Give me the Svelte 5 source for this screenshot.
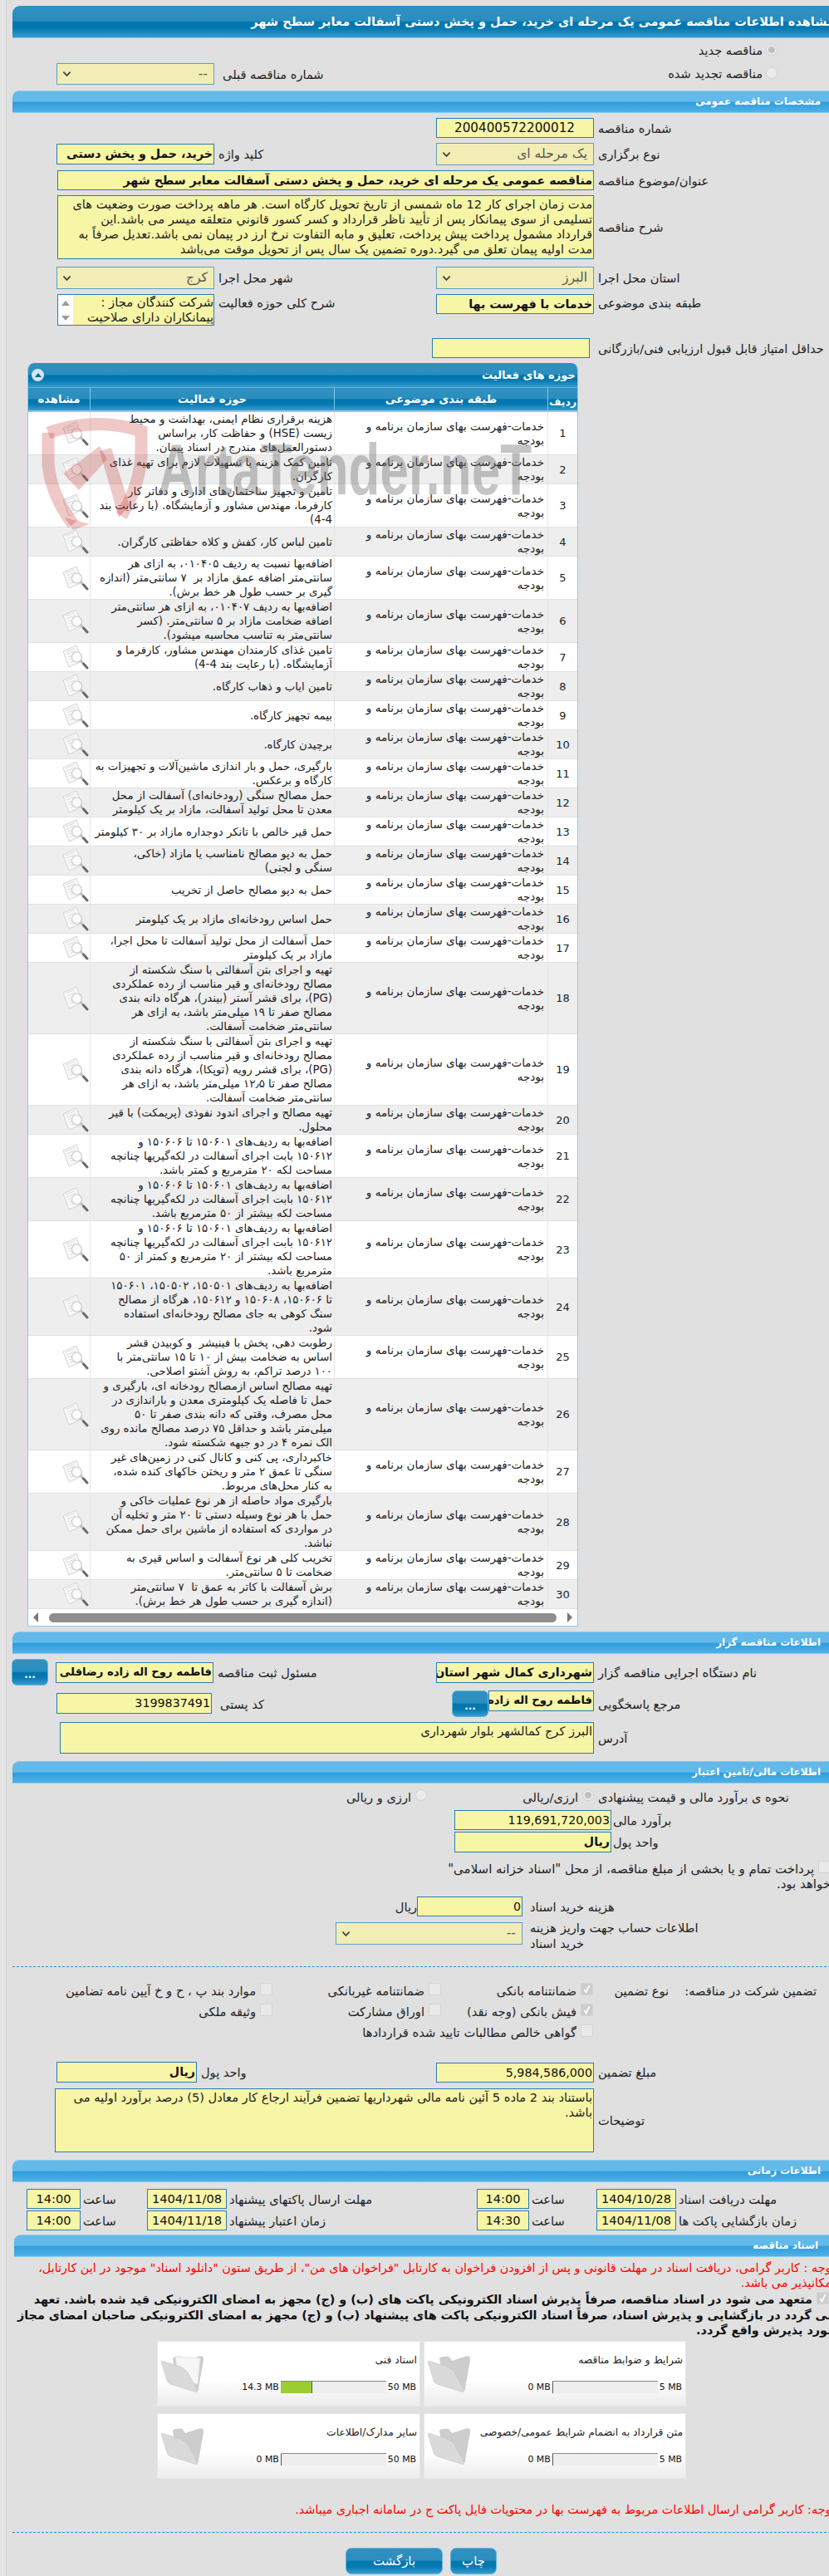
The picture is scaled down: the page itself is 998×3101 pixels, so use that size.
<script>
  const cat = 'خدمات-فهرست بهای سازمان برنامه و\nبودجه';
  const lak1 = 'اضافه‌بها به ردیف‌های ۱۵۰۶۰۱ تا ۱۵۰۶۰۶ و\n۱۵۰۶۱۲ بابت اجرای آسفالت در لکه‌گیریها چنانچه\n';
  const rows = [
    'هزینه برقراری نظام ایمنی، بهداشت و محیط\nزیست (HSE) و حفاظت کار، براساس\nدستورالعمل‌های مندرج در اسناد پیمان.',
    'تامین کمک هزینه یا تسهیلات لازم برای تهیه غذای\nکارگران.',
    'تامین و تجهیز ساختمان‌های اداری و دفاتر کار\nکارفرما، مهندس مشاور و آزمایشگاه. (با رعایت بند\n4-4)',
    'تامین لباس کار، کفش و کلاه حفاظتی کارگران.',
    'اضافه‌بها نسبت به ردیف ۰۱۰۴۰۵، به ازای هر\nسانتی‌متر اضافه عمق مازاد بر  ۷ سانتی‌متر (اندازه\nگیری بر حسب طول هر خط برش).',
    'اضافه‌بها به ردیف ۰۱۰۴۰۷، به ازای هر سانتی‌متر\nاضافه ضخامت مازاد بر ۵ سانتی‌متر. (کسر\nسانتی‌متر به تناسب محاسبه میشود).',
    'تامین غذای کارمندان مهندس مشاور، کارفرما و\nآزمایشگاه. (با رعایت بند 4-4)',
    'تامین ایاب و ذهاب کارگاه.',
    'بیمه تجهیز کارگاه.',
    'برچیدن کارگاه.',
    'بارگیری، حمل و بار اندازی ماشین‌آلات و تجهیزات به\nکارگاه و برعکس.',
    'حمل مصالح سنگی (رودخانه‌ای) آسفالت از محل\nمعدن تا محل تولید آسفالت، مازاد بر یک کیلومتر',
    'حمل قیر خالص با تانکر دوجداره مازاد بر ۳۰ کیلومتر',
    'حمل به دپو مصالح نامناسب یا مازاد (خاکی،\nسنگی و لجنی)',
    'حمل به دپو مصالح حاصل از تخریب',
    'حمل اساس رودخانه‌ای مازاد بر یک کیلومتر',
    'حمل آسفالت از محل تولید آسفالت تا محل اجرا،\nمازاد بر یک کیلومتر',
    'تهیه و اجرای بتن آسفالتی با سنگ شکسته از\nمصالح رودخانه‌ای و قیر مناسب از رده عملکردی\n(PG)، برای قشر آستر (بیندر)، هرگاه دانه بندی\nمصالح صفر تا ۱۹ میلی‌متر باشد، به ازای هر\nسانتی‌متر ضخامت آسفالت.',
    'تهیه و اجرای بتن آسفالتی با سنگ شکسته از\nمصالح رودخانه‌ای و قیر مناسب از رده عملکردی\n(PG)، برای قشر رویه (توپکا)، هرگاه دانه بندی\nمصالح صفر تا ۱۲٫۵ میلی‌متر باشد، به ازای هر\nسانتی‌متر ضخامت آسفالت.',
    'تهیه مصالح و اجرای اندود نفوذی (پریمکت) با قیر\nمحلول.',
    lak1 + 'مساحت لکه ۲۰ مترمربع و کمتر باشد.',
    lak1 + 'مساحت لکه بیشتر از ۵۰ مترمربع باشد.',
    lak1 + 'مساحت لکه بیشتر از ۲۰ مترمربع و کمتر از ۵۰\nمترمربع باشد.',
    'اضافه‌بها به ردیف‌های ۱۵۰۵۰۱، ۱۵۰۵۰۲، ۱۵۰۶۰۱\nتا ۱۵۰۶۰۶، ۱۵۰۶۰۸ و ۱۵۰۶۱۲، هرگاه از مصالح\nسنگ کوهی به جای مصالح رودخانه‌ای استفاده\nشود.',
    'رطوبت دهی، پخش با فینیشر  و کوبیدن قشر\nاساس به ضخامت بیش از ۱۰ تا ۱۵ سانتی‌متر با\n۱۰۰ درصد تراکم، به روش آشتو اصلاحی.',
    'تهیه مصالح اساس ازمصالح رودخانه ای، بارگیری و\nحمل تا فاصله یک کیلومتری معدن و باراندازی در\nمحل مصرف، وقتی که دانه بندی صفر تا ۵۰\nمیلی‌متر باشد و حداقل ۷۵ درصد مصالح مانده روی\nالک نمره ۴ در دو جبهه شکسته شود.',
    'خاکبرداری، پی کنی و کانال کنی در زمین‌های غیر\nسنگی تا عمق ۲ متر و ریختن خاکهای کنده شده،\nبه کنار محل‌های مربوط.',
    'بارگیری مواد حاصله از هر نوع عملیات خاکی و\nحمل با هر نوع وسیله دستی تا ۲۰ متر و تخلیه آن\nدر مواردی که استفاده از ماشین برای حمل ممکن\nنباشد.',
    'تخریب کلی هر نوع آسفالت و اساس قیری به\nضخامت تا ۵ سانتی‌متر.',
    'برش آسفالت با کاتر به عمق تا  ۷ سانتی‌متر\n(اندازه گیری بر حسب طول هر خط برش).'
  ];
  const docs = [
    { title: 'شرایط و ضوابط مناقصه', used: '0 MB', max: '5 MB', pct: 0 },
    { title: 'اسناد فنی', used: '14.3 MB', max: '50 MB', pct: 29, paper: true },
    { title: 'متن قرارداد به انضمام شرایط عمومی/خصوصی', used: '0 MB', max: '5 MB', pct: 0 },
    { title: 'سایر مدارک/اطلاعات', used: '0 MB', max: '50 MB', pct: 0 }
  ];
</script>

{#snippet chevron()}
  <svg class="chev" viewBox="0 0 12 8" aria-hidden="true"><path d="M1.5 1.5 L6 6 L10.5 1.5" fill="none" stroke="#444" stroke-width="2"/></svg>
{/snippet}

{#snippet tick()}
  <svg viewBox="0 0 15 15" aria-hidden="true"><path d="M4 8 L6.5 12 L11 2.5" fill="none" stroke="#fff" stroke-width="2"/></svg>
{/snippet}

{#snippet glass()}
  <svg class="glass" viewBox="0 0 32 30" aria-hidden="true">
    <path d="M1 8 L17 1 L24 20 L8 27 Z" fill="#f8f8f8" stroke="#d4d4d4"/>
    <path d="M4 9 L15 4.500 M5.500 12 L16 7.500 M7 15 L11 13.500 M8.500 18 L11 17 M10 21 L15 19" stroke="#dcdcdc" fill="none"/>
    <circle cx="17.500" cy="15" r="6" fill="#fdfdfd" fill-opacity="0.7" stroke="#cdcdcd" stroke-width="1.2"/>
    <path d="M22 19.500 L25.500 23" stroke="#bdbdbd" stroke-width="2.500"/>
    <path d="M25.500 23 L30 28" stroke="#6a6a6a" stroke-width="3" stroke-linecap="round"/>
  </svg>
{/snippet}

{#snippet folder(paper)}
  <svg class="folder" viewBox="0 0 54 48" aria-hidden="true">
    <path d="M15 5 Q16 3 19 3 L25 2.500 Q27 3 30 8 L47 2.500 Q53 1.500 52 7 L46 41 Q45 47 41 45 L20 38 Z" fill="#cdcdcd"/>
    {#if paper}
      <path d="M18 3 L48 5 L45 36 L22 30 Z" fill="#f6f6f6" stroke="#e2e2e2"/>
    {/if}
    <path d="M1.500 10 Q0.500 7.500 3.500 8.500 L24 15 Q30 17.500 33 22 L45 44 Q44 46 40 44.500 L12 36 Q8.500 34.500 7.500 30 Z" fill="#dadada" stroke="#c4c4c4" stroke-width="0.6"/>
  </svg>
{/snippet}

<div class="root">
  <div class="strip"></div>
  <div class="page">
    <div class="bar title">مشاهده اطلاعات مناقصه عمومی یک مرحله ای خرید، حمل و پخش دستی آسفالت معابر سطح شهر</div>

    <div class="choice mt7">
      <span class="radio on"></span><span>مناقصه جدید</span>
    </div>
    <div class="choice-row mt9">
      <div class="choice"><span class="radio"></span><span>مناقصه تجدید شده</span></div>
      <div class="prev">
        <span class="lbl">شماره مناقصه قبلی</span>
        <div class="sel h26 w190"><span>--</span>{@render chevron()}</div>
      </div>
    </div>

    <div class="sec mt7">مشخصات مناقصه عمومی</div>

    <div class="form mt6">
      <span class="lbl">شماره مناقصه</span>
      <div class="fld h24 num center">200400572200012</div>
    </div>
    <div class="form mt6">
      <span class="lbl">نوع برگزاری</span>
      <div class="sel h27"><span>یک مرحله ای</span>{@render chevron()}</div>
      <span class="lbl">کلید واژه</span>
      <div class="fld h25 b">خرید، حمل و پخش دستی</div>
    </div>
    <div class="form mt6">
      <span class="lbl">عنوان/موضوع مناقصه</span>
      <div class="fld h24 b span3 from1">مناقصه عمومی یک مرحله ای خرید، حمل و پخش دستی آسفالت معابر سطح شهر</div>
    </div>
    <div class="form mt6">
      <span class="lbl">شرح مناقصه</span>
      <div class="area span3 from1 h77">مدت زمان اجرای کار 12 ماه شمسی از تاریخ تحویل کارگاه است. هر ماهه پرداخت صورت وضعیت های
تسلیمی از سوی پیمانکار پس از تأیید ناظر قرارداد و کسر کسور قانوني متعلقه میسر می باشد.این
قرارداد مشمول پرداخت پیش پرداخت، تعلیق و مابه التفاوت نرخ ارز در پیمان نمی باشد.تعدیل صرفاً به
مدت اولیه پیمان تعلق می گیرد.دوره تضمین یک سال پس از تحویل موقت می‌باشد</div>
    </div>
    <div class="form mt9">
      <span class="lbl">استان محل اجرا</span>
      <div class="sel h27"><span>البرز</span>{@render chevron()}</div>
      <span class="lbl">شهر محل اجرا</span>
      <div class="sel h27"><span>کرج</span>{@render chevron()}</div>
    </div>
    <div class="form mt6 top">
      <span class="lbl up">طبقه بندی موضوعی</span>
      <div class="fld h24 b">خدمات با فهرست بها</div>
      <span class="lbl up">شرح کلی حوزه فعالیت</span>
      <div class="list">
        <div class="list-text">شرکت کنندگان مجاز :
پیمانکاران دارای صلاحیت</div>
        <div class="list-bar"><i class="tri-up"></i><i class="tri-down"></i></div>
      </div>
    </div>
    <div class="score mt15">
      <span class="lbl">حداقل امتیاز قابل قبول ارزیابی فنی/بازرگانی</span>
      <div class="fld h24"></div>
    </div>

    <div class="tablewrap mt6">
      <div class="tcap"><span>حوزه های فعالیت</span><span class="collapse"><i></i></span></div>
      <table>
        <colgroup><col class="c1"/><col class="c2"/><col class="c3"/><col class="c4"/></colgroup>
        <thead>
          <tr><th class="low">ردیف</th><th>طبقه بندی موضوعی</th><th>حوزه فعالیت</th><th>مشاهده</th></tr>
        </thead>
        <tbody>
          {#each rows as r, i}
            <tr class:alt={i % 2 === 1}>
              <td class="idx">{i + 1}</td>
              <td class="txt">{cat}</td>
              <td class="txt act">{r}</td>
              <td class="view">{@render glass()}</td>
            </tr>
          {/each}
        </tbody>
      </table>
      <div class="hscroll">
        <i class="tri-right"></i><span class="thumb"></span><i class="tri-left"></i>
      </div>
      <svg class="mark" viewBox="0 0 620 180" aria-hidden="true">
        <g fill="none" stroke="#c43a3a" stroke-opacity="0.28" stroke-width="15">
          <path d="M10 24 Q68 4 122 22 L122 55 Q118 92 98 124"/>
          <path d="M10 24 L10 62 Q14 100 40 134"/>
        </g>
        <g fill="#c43a3a" fill-opacity="0.28">
          <polygon points="72,40 81,56 47,93 28,73"/>
          <polygon points="72,46 86,42 108,112 95,126"/>
          <polygon points="30,126 60,134 40,141"/>
        </g>
        <text class="mark-text" x="142" y="98" textLength="450" lengthAdjust="spacingAndGlyphs">ArtaTender.neT</text>
      </svg>
    </div>

    <div class="sec mt6">اطلاعات مناقصه گزار</div>
    <div class="form4 mt6">
      <span class="lbl">نام دستگاه اجرایی مناقصه گزار</span>
      <div class="fld h25 b">شهرداری کمال شهر استان</div>
      <span class="lbl">مسئول ثبت مناقصه</span>
      <div class="fld h25 b tight">فاطمه روح اله زاده رضاقلی</div>
      <button class="dots">...</button>
    </div>
    <div class="formb mt6">
      <span class="lbl">مرجع پاسخگویی</span>
      <div class="fld h25 b slf tight">فاطمه روح اله زاده</div>
      <button class="dots">...</button>
      <span class="lbl zip">کد پستی</span>
      <div class="fld h25 num low3">3199837491</div>
    </div>
    <div class="form mt6">
      <span class="lbl">آدرس</span>
      <div class="area span3 addr h38">البرز کرج کمالشهر بلوار شهرداری</div>
    </div>

    <div class="sec mt9">اطلاعات مالی/تامین اعتبار</div>
    <div class="est mt4">
      <span class="lbl">نحوه ی برآورد مالی و قیمت پیشنهادی</span>
      <span class="radio on"></span><span class="opt1">ارزی/ریالی</span>
      <span class="radio"></span><span>ارزی و ریالی</span>
    </div>
    <div class="money mt4">
      <span class="lbl">برآورد مالی</span>
      <div class="fld h24 num">119,691,720,003</div>
    </div>
    <div class="money mt2">
      <span class="lbl">واحد پول</span>
      <div class="fld h25 b">ریال</div>
    </div>
    <div class="para mt11"><span class="check"></span> پرداخت تمام و یا بخشی از مبلغ مناقصه، از محل "اسناد خزانه اسلامی"<br/>خواهد بود.</div>
    <div class="cost mt6">
      <span class="lbl">هزینه خرید اسناد</span>
      <div class="fld h24 num">0</div>
      <span>ریال</span>
    </div>
    <div class="account mt4">
      <span class="lbl">اطلاعات حساب جهت واریز هزینه<br/>خرید اسناد</span>
      <div class="sel h27"><span>--</span>{@render chevron()}</div>
    </div>

    <div class="dash mt20"></div>

    <div class="guar mt19">
      <span>تضمین شرکت در مناقصه:</span>
      <span>نوع تضمین</span>
      <div class="ck"><span class="check on">{@render tick()}</span>ضمانتنامه بانکی</div>
      <div class="ck"><span class="check"></span>ضمانتنامه غیربانکی</div>
      <div class="ck"><span class="check"></span>موارد بند پ ، ح و خ آیین نامه تضامین</div>
      <span></span><span></span>
      <div class="ck"><span class="check on">{@render tick()}</span>فیش بانکی (وجه نقد)</div>
      <div class="ck"><span class="check"></span>اوراق مشارکت</div>
      <div class="ck"><span class="check"></span>وثیقه ملکی</div>
      <span></span><span></span>
      <div class="ck wide"><span class="check"></span>گواهی خالص مطالبات تایید شده قراردادها</div>
    </div>

    <div class="amount mt30">
      <span class="lbl">مبلغ تضمین</span>
      <div class="fld h24 num">5,984,586,000</div>
      <span class="lbl">واحد پول</span>
      <div class="fld h25 b">ریال</div>
    </div>
    <div class="form mt7">
      <span class="lbl">توضیحات</span>
      <div class="area span3 notes h77">باستناد بند 2 ماده 5 آئین نامه مالی شهرداریها تضمین فرآیند ارجاع کار معادل (5) درصد برآورد اولیه می
باشد.</div>
    </div>

    <div class="sec mt9">اطلاعات زمانی</div>
    <div class="times mt8">
      <span class="lbl">مهلت دریافت اسناد</span>
      <div class="fld h24 num time">1404/10/28</div>
      <span class="lbl">ساعت</span>
      <div class="fld h24 num time">14:00</div>
      <span class="lbl">مهلت ارسال پاکتهای پیشنهاد</span>
      <div class="fld h24 num time">1404/11/08</div>
      <span class="lbl">ساعت</span>
      <div class="fld h24 num time">14:00</div>
    </div>
    <div class="times mt2">
      <span class="lbl">زمان بازگشایی پاکت ها</span>
      <div class="fld h24 num time">1404/11/08</div>
      <span class="lbl">ساعت</span>
      <div class="fld h24 num time">14:30</div>
      <span class="lbl">زمان اعتبار پیشنهاد</span>
      <div class="fld h24 num time">1404/11/18</div>
      <span class="lbl">ساعت</span>
      <div class="fld h24 num time">14:00</div>
    </div>

    <div class="sec docs mt5">اسناد مناقصه</div>
    <div class="red mt4">توجه : کاربر گرامی، دریافت اسناد در مهلت قانونی و پس از افزودن فراخوان به کارتابل "فراخوان های من"، از طریق ستون "دانلود اسناد" موجود در این کارتابل،
امکانپذیر می باشد.</div>
    <div class="pledge mt2"><span class="check on">{@render tick()}</span> متعهد می شود در اسناد مناقصه، صرفاً پذیرش اسناد الکترونیکی پاکت های (ب) و (ج) مجهز به امضای الکترونیکی قید شده باشد. تعهد
می گردد در بازگشایی و پذیرش اسناد، صرفاً اسناد الکترونیکی پاکت های پیشنهاد (ب) و (ج) مجهز به امضای الکترونیکی صاحبان امضای مجاز
مورد پذیرش واقع گردد.</div>

    <div class="cards mt3">
      {#each docs as d}
        <div class="card">
          <div class="card-main">
            <div class="card-title">{d.title}</div>
            <div class="meter">
              <span dir="ltr">{d.max}</span>
              <div class="track"><div class="fill" style="width:{d.pct}%"></div></div>
              <span dir="ltr">{d.used}</span>
            </div>
          </div>
          {@render folder(d.paper)}
        </div>
      {/each}
    </div>

    <div class="red note mt28">توجه: کاربر گرامی ارسال اطلاعات مربوط به فهرست بها در محتویات فایل پاکت ج در سامانه اجباری میباشد.</div>
    <div class="dash mt18"></div>
    <div class="actions mt18">
      <button class="act-btn print">چاپ</button>
      <button class="act-btn back">بازگشت</button>
    </div>
  </div>
</div>

<style>
  :global(body) { margin: 0; background: #e0e0e0; }
  .root { width: 998px; height: 3101px; overflow: hidden; display: flex; background: #e0e0e0; color: #222; font-family: "DejaVu Sans", sans-serif; font-size: 14.6px; line-height: 17px; }
  .strip { flex: none; width: 8px; background: #e5e5e5; border-right: 1px solid #cfcfcf; box-sizing: border-box; }
  .page { flex: none; width: 990px; margin-left: 7px; padding-top: 7px; direction: rtl; box-sizing: border-box; }

  .mt2 { margin-top: 2px; } .mt3 { margin-top: 3px; } .mt4 { margin-top: 4px; } .mt5 { margin-top: 5px; }
  .mt6 { margin-top: 6px; } .mt7 { margin-top: 7px; } .mt8 { margin-top: 8px; } .mt9 { margin-top: 9px; }
  .mt11 { margin-top: 11px; } .mt15 { margin-top: 15px; } .mt18 { margin-top: 18px; } .mt19 { margin-top: 19px; }
  .mt20 { margin-top: 20px; } .mt28 { margin-top: 28px; } .mt30 { margin-top: 30px; }
  .h24 { height: 24px; } .h25 { height: 25px; } .h26 { height: 26px; } .h27 { height: 27px; } .h38 { height: 38px; } .h77 { height: 77px; }
  .w190 { width: 190px; }

  .bar, .act-btn, .dots, .tcap, thead th {
    background: linear-gradient(#3091c1 0%, #2b8dbe 47%, #0076ae 52%, #0579b1 72%, #389cce 100%);
  }
  .title { height: 39px; border-radius: 9px 0 0 0; border-bottom: 1px solid #7cc6ea; box-sizing: border-box; color: #fff; font-size: 14.5px; font-weight: bold; line-height: 38px; white-space: nowrap; overflow: hidden; }
  .sec { height: 27px; box-sizing: border-box; border-radius: 8px 0 0 0; border-top: 1px solid #8ccbef; border-bottom: 1px solid #86cdf2; background: linear-gradient(#63b9e9 0%, #63b9e9 48%, #2f9edd 54%, #52b0e6 100%); color: #fff; font-weight: bold; font-size: 11.9px; line-height: 25px; padding-right: 17px; }
  .sec.docs { margin-left: 2px; padding-right: 20px; }

  .choice { display: flex; align-items: center; gap: 4px; margin-right: 69px; height: 14px; }
  .choice-row { display: flex; height: 26px; align-items: center; justify-content: space-between; }
  .choice-row .choice { margin-top: -2px; }
  .prev { display: flex; align-items: center; gap: 5px; margin-left: 53px; }

  .radio { flex: none; box-sizing: border-box; width: 14px; height: 14px; border-radius: 50%; border: 1px solid #d2d2d2; background: #ececec; position: relative; display: inline-block; }
  .radio.on::after { content: ""; position: absolute; inset: 2px; border-radius: 50%; background: #c0c0c0; }
  .check { flex: none; display: inline-block; box-sizing: border-box; width: 15px; height: 15px; border: 1px solid #d4d4d4; border-radius: 2px; background: #e9e9e9; vertical-align: middle; }
  .check.on { background: #cdcdcd; }
  .check :global(svg) { display: block; width: 13px; height: 13px; }

  .form, .form4, .formb, .amount { display: grid; align-items: center; }
  .form { grid-template-columns: 290px 190px 267px 190px; }
  .form.top { align-items: start; height: 38px; }
  .form4 { grid-template-columns: 290px 190px 268px 190px 53px; height: 32px; }
  .form4 .dots { margin-right: 9px; width: 44px; }
  .formb { grid-template-columns: 290px 127px 51px 282px 187px; height: 32px; }
  .amount { grid-template-columns: 290px 190px 288px 169px; }
  .lbl { display: block; text-align: left; padding-left: 5px; white-space: nowrap; }
  .lbl.up { margin-top: 2px; }
  .lbl.zip { padding-left: 10px; }
  .slf { align-self: start; }
  .low3 { align-self: end; margin-bottom: 4px; }

  .fld { box-sizing: border-box; background: #f7f5a6; border: 1px solid #2a7cb3; color: #111; white-space: nowrap; overflow: hidden; line-height: 22px; font-size: 14.6px; }
  .fld.b { font-weight: bold; font-size: 14.2px; padding-right: 1px; }
  .fld.b.tight { font-size: 13.2px; }
  .fld.num { font-size: 14.25px; padding-right: 1px; }
  .fld.center { text-align: center; font-size: 15.2px; }
  .fld.time { text-align: center; font-size: 14.6px; padding: 0; }
  .span3 { grid-column: span 3; }
  .from1 { width: 646px; }
  .sel { box-sizing: border-box; background: #f1edb4; border: 1px solid #5f9fc6; color: #555; display: flex; justify-content: space-between; align-items: center; padding: 0 7px 0 6px; font-size: 15.6px; }
  .chev { width: 11px; height: 8px; flex: none; }
  .area { box-sizing: border-box; background: #f7f5a6; border: 1px solid #2a7cb3; color: #222; white-space: pre; overflow: hidden; font-size: 14.6px; line-height: 18px; padding: 1px 1px 0 0; }
  .area.addr { width: 643px; }
  .area.notes { width: 649px; }
  .list { box-sizing: border-box; height: 38px; background: #f7f5a6; border: 1px solid #2a7cb3; display: flex; overflow: hidden; width: 189px; justify-self: start; }
  .list-text { flex: 1; white-space: pre; font-size: 14.7px; line-height: 18px; overflow: hidden; }
  .list-bar { flex: none; width: 18px; background: #fff; display: flex; flex-direction: column; justify-content: space-between; align-items: center; padding: 7px 0 5px; box-sizing: border-box; }
  .tri-up { width: 0; height: 0; border: 5px solid transparent; border-top: 0; border-bottom: 6px solid #9a9a9a; }
  .tri-down { width: 0; height: 0; border: 5px solid transparent; border-bottom: 0; border-top: 6px solid #9a9a9a; }

  .score { display: grid; grid-template-columns: 295px 190px; align-items: center; }
  .score .lbl { padding-left: 10px; }

  .tablewrap { position: relative; width: 663px; margin-right: 309px; box-sizing: border-box; border: 1px solid #8fc9ec; border-top: 0; border-radius: 8px 8px 0 0; background: #fff; overflow: hidden; }
  .tcap { height: 29px; display: flex; align-items: center; justify-content: space-between; color: #fff; font-weight: bold; font-size: 13.1px; padding: 0 2px 0 4px; box-sizing: border-box; }
  .collapse { width: 15px; height: 15px; border-radius: 50%; background: #d4e6f5; display: flex; align-items: center; justify-content: center; }
  .collapse i { width: 0; height: 0; border: 4px solid transparent; border-top: 0; border-bottom: 5px solid #1b5f95; }
  table { width: 661px; border-collapse: separate; border-spacing: 0; table-layout: fixed; }
  .c1 { width: 36px; } .c2 { width: 257px; } .c3 { width: 294px; } .c4 { width: 74px; }
  thead th { height: 30px; box-sizing: border-box; padding: 0; color: #fff; font-size: 13.2px; font-weight: bold; border-left: 1px solid #7cc6ea; border-bottom: 2px solid #84cdf2; border-top: 1px solid #62b1dc; text-align: center; }
  thead th:last-child { border-left: 0; }
  thead th.low { padding-top: 6px; font-size: 12.5px; }
  tbody td { padding: 0; border-bottom: 1px solid #e1e1e1; border-left: 1px solid #e6e6e6; background: #fff; line-height: 17px; vertical-align: middle; color: #222; }
  tbody td:last-child { border-left: 0; }
  tr.alt td { background: #eee; }
  .idx { text-align: center; font-size: 13px; }
  .txt { white-space: pre; font-size: 13.5px; padding-right: 4px; overflow: hidden; }
  .txt.act { padding-right: 2px; font-size: 13.3px; }
  .view :global(.glass) { display: block; width: 32px; height: 30px; margin-right: 1px; }
  .hscroll { height: 20px; background: #fff; display: flex; align-items: center; justify-content: space-between; padding: 0 6px; box-sizing: border-box; }
  .thumb { flex: none; width: 611px; height: 11px; border-radius: 6px; background: #8e8e8e; }
  .tri-left { width: 0; height: 0; border: 6px solid transparent; border-left: 0; border-right: 6px solid #777; }
  .tri-right { width: 0; height: 0; border: 6px solid transparent; border-right: 0; border-left: 6px solid #777; }
  .mark { position: absolute; left: 14px; top: 60px; width: 620px; height: 180px; pointer-events: none; }
  .mark-text { font-family: "Liberation Sans", sans-serif; font-weight: bold; font-size: 88px; fill: #6e6e6e; fill-opacity: 0.4; direction: ltr; }

  .dots { box-sizing: border-box; height: 32px; width: 44px; padding: 0; border: 1px solid #61b6de; border-radius: 6px; color: #fff; font: bold 12px/18px "DejaVu Sans", sans-serif; text-align: center; padding-top: 6px; }

  .est { display: flex; align-items: center; height: 24px; }
  .est .lbl { width: 290px; box-sizing: border-box; flex: none; }
  .est .radio { margin-top: -4px; margin-left: 5px; }
  .est .opt1 { width: 182px; flex: none; }
  .money { display: grid; grid-template-columns: 269px 189px; align-items: center; }
  .money .lbl { padding-left: 2px; }
  .para { line-height: 18px; white-space: nowrap; height: 36px; padding-right: 5px; font-size: 15px; }
  .para .check { margin-top: -6px; }
  .cost { display: grid; grid-template-columns: 376px 127px auto; align-items: center; }
  .cost .lbl, .account .lbl { padding-left: 9px; }
  .account { display: grid; grid-template-columns: 376px 225px; align-items: start; height: 36px; line-height: 19px; }
  .account .sel { margin-top: 3px; }

  .dash { height: 0; border-top: 1px dashed #2a8fc4; }

  .guar { display: grid; grid-template-columns: 178px 91px 183px 203px 1fr; grid-auto-rows: 15px; row-gap: 10px; margin-right: 22px; line-height: 19px; white-space: nowrap; }
  .ck { display: flex; align-items: flex-start; gap: 5px; font-size: 14.7px; }
  .ck.wide { grid-column: span 3; }
  .amount .lbl:nth-of-type(3) { padding-left: 6px; }

  .times { display: grid; grid-template-columns: 191px 96px 81px 63px 301px 96px 80px 65px; align-items: center; }
  .times .lbl { padding-left: 3px; }

  .red { color: #f00; line-height: 18px; white-space: pre; font-size: 14.4px; }
  .pledge { color: #111; font-weight: bold; font-size: 14.36px; line-height: 18.5px; white-space: pre; height: 55.5px; }
  .pledge .check { margin: -6px 7px 0 0; }
  .cards { display: grid; grid-template-columns: 316px 317px; grid-auto-rows: 79px; gap: 8px 4px; margin-right: 179px; }
  .card { display: flex; box-sizing: border-box; background: linear-gradient(#fff 0%, #fff 60%, #ececec 100%); border: 1px solid #e6e6e6; }
  .card-main { flex: 1; min-width: 0; padding: 14px 3px 0 0; }
  .card-title { line-height: 17px; font-size: 12.3px; white-space: nowrap; color: #222; }
  .meter { display: flex; align-items: center; height: 15px; margin-top: 16px; gap: 2px; font-size: 10.9px; line-height: 15px; color: #111; padding-right: 1px; }
  .track { flex: none; width: 127px; height: 15px; box-sizing: border-box; background: #eee; border-top: 1px solid #888; position: relative; }
  .fill { position: absolute; left: 0; top: 0; bottom: 0; background: #9acd32; border-right: 1px solid #555; }
  .card :global(.folder) { flex: none; width: 54px; height: 48px; margin: 15px 0 0 3px; }

  .actions { display: flex; gap: 9px; margin-right: 407px; }
  .act-btn { box-sizing: border-box; height: 32px; border: 1px solid #61b6de; border-radius: 7px; color: #fff; font: 15px/20px "DejaVu Sans", sans-serif; padding: 0; }
  .print { width: 56px; } .back { width: 117px; }
</style>
